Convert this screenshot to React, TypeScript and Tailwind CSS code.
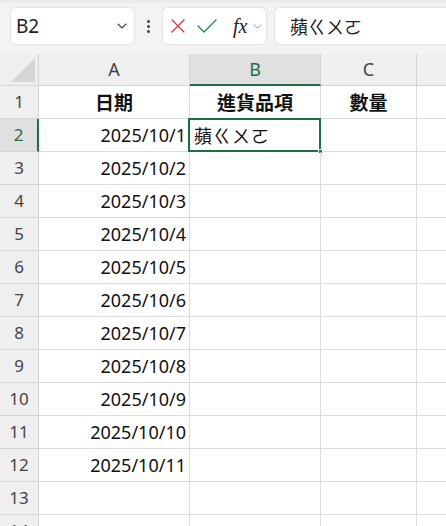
import React from "react";

const font = { fontFamily: '"Noto Sans", "Noto Sans CJK TC", sans-serif' };
const cjk = { fontFamily: '"Noto Sans CJK TC", "Noto Sans", sans-serif' };

const dates = [
  "",
  "2025/10/1",
  "2025/10/2",
  "2025/10/3",
  "2025/10/4",
  "2025/10/5",
  "2025/10/6",
  "2025/10/7",
  "2025/10/8",
  "2025/10/9",
  "2025/10/10",
  "2025/10/11",
  "",
  "",
];

function Chevron({ className }: { className?: string }) {
  return (
    <svg viewBox="0 0 10 6" className={className} fill="none" stroke="currentColor" strokeWidth="1.1" strokeLinecap="round" strokeLinejoin="round">
      <path d="M1 1 L5 5 L9 1" />
    </svg>
  );
}

export default function App() {
  const rows = Array.from({ length: 14 }, (_, i) => i + 1);
  return (
    <div className="w-[446px] h-[526px] overflow-hidden bg-white text-[#222]" style={font}>
      {/* top bar */}
      <div className="h-[54px] bg-[#f3f3f3] border-t-[3px] border-[#ebebeb] flex items-start pt-[4px] pl-[10px] gap-0">
        <div className="w-[125px] h-[38px] bg-white border border-[#e3e3e3] rounded-[6px] flex items-center pl-[5px] pr-[7px]">
          <span className="text-[19px] text-[#222] flex-1 leading-none">B2</span>
          <Chevron className="w-[10px] h-[6px] text-[#444]" />
        </div>
        <div className="w-[27px] h-[38px] flex items-center justify-center">
          <div className="flex flex-col gap-[2px]">
            <span className="w-[3px] h-[3px] bg-[#444] rounded-full" />
            <span className="w-[3px] h-[3px] bg-[#444] rounded-full" />
            <span className="w-[3px] h-[3px] bg-[#444] rounded-full" />
          </div>
        </div>
        <div className="w-[105px] h-[38px] bg-white border border-[#e3e3e3] rounded-[6px] flex items-center pl-[7px]">
          <svg viewBox="0 0 16 16" className="w-[16px] h-[16px]" fill="none" stroke="#d13438" strokeWidth="1.3" strokeLinecap="round">
            <path d="M2 2 L14 14 M14 2 L2 14" />
          </svg>
          <svg viewBox="0 0 20 16" className="w-[20px] h-[16px] ml-[11px]" fill="none" stroke="#1f8a3e" strokeWidth="1.3" strokeLinecap="round" strokeLinejoin="round">
            <path d="M1 8 L7 14 L19 2" />
          </svg>
          <span className="ml-[16px] text-[20px] italic leading-none text-[#222]" style={{ fontFamily: '"Liberation Serif", "DejaVu Serif", serif' }}>
            fx
          </span>
          <Chevron className="w-[9px] h-[5px] text-[#8a8a8a] ml-[6px]" />
        </div>
        <div className="flex-1 h-[38px] ml-[7px] bg-white border border-r-0 border-[#e3e3e3] rounded-l-[6px] flex items-center pl-[15px]">
          <span className="text-[18px] text-[#222] leading-none" style={cjk}>蘋ㄍㄨㄛ</span>
        </div>
      </div>

      {/* sheet */}
      <div className="grid grid-cols-[39px_151px_131px_96px_1fr]">
        {/* column header row */}
        <div className="h-[32px] bg-[#efefef] border-r border-b border-[#d4d4d4] relative">
          <svg viewBox="0 0 10 10" className="absolute right-[3px] bottom-[3px] w-[24px] h-[24px]">
            <path d="M10 0 L10 10 L0 10 Z" fill="#d6d6d6" />
          </svg>
        </div>
        <div className="h-[32px] bg-[#efefef] border-r border-b border-[#d4d4d4] flex items-center justify-center text-[18px] text-[#444]">A</div>
        <div className="h-[32px] bg-[#e0e0e0] border-r border-b-2 border-r-[#d4d4d4] border-b-[#1e6e42] flex items-center justify-center text-[18px] text-[#1e6e42]">B</div>
        <div className="h-[32px] bg-[#efefef] border-r border-b border-[#d4d4d4] flex items-center justify-center text-[18px] text-[#444]">C</div>
        <div className="h-[32px] bg-[#efefef] border-b border-[#d4d4d4]" />

        {rows.map((r) => {
          const sel = r === 2;
          const head = "h-[33px] border-r border-b border-[#dcdcdc] flex items-center justify-center text-[19px] font-bold text-[#111]";
          return (
            <React.Fragment key={r}>
              <div
                className={
                  sel
                    ? "h-[33px] bg-[#e0e0e0] border-r-2 border-b border-r-[#1e6e42] border-b-[#d4d4d4] flex items-center justify-center text-[17px] text-[#1e6e42]"
                    : "h-[33px] bg-[#efefef] border-r border-b border-[#d4d4d4] flex items-center justify-center text-[17px] text-[#444]"
                }
              >
                {r}
              </div>
              <div className={r === 1 ? head : "h-[33px] border-r border-b border-[#dcdcdc] flex items-center justify-end pr-[3px] text-[18px] text-[#111]"}>
                {r === 1 ? <span style={cjk}>日期</span> : dates[r - 1]}
              </div>
              <div className={r === 1 ? head : "h-[33px] border-r border-b border-[#dcdcdc] relative flex items-center pl-[4px] text-[18px] text-[#111]"}>
                {r === 1 ? <span style={cjk}>進貨品項</span> : sel ? (
                  <>
                    <span className="tracking-[1px]" style={cjk}>蘋ㄍㄨㄛ</span>
                    <div className="absolute left-[-2px] top-[-1px] right-[-1px] bottom-[-1px] border-2 border-[#1e6e42] pointer-events-none" />
                    <div className="absolute right-[-3px] bottom-[-3px] w-[5px] h-[5px] bg-[#1e6e42] border border-white" />
                  </>
                ) : null}
              </div>
              <div className={r === 1 ? head : "h-[33px] border-r border-b border-[#dcdcdc]"}>
                {r === 1 ? <span style={cjk}>數量</span> : null}
              </div>
              <div className="h-[33px] border-b border-[#dcdcdc]" />
            </React.Fragment>
          );
        })}
      </div>
    </div>
  );
}
